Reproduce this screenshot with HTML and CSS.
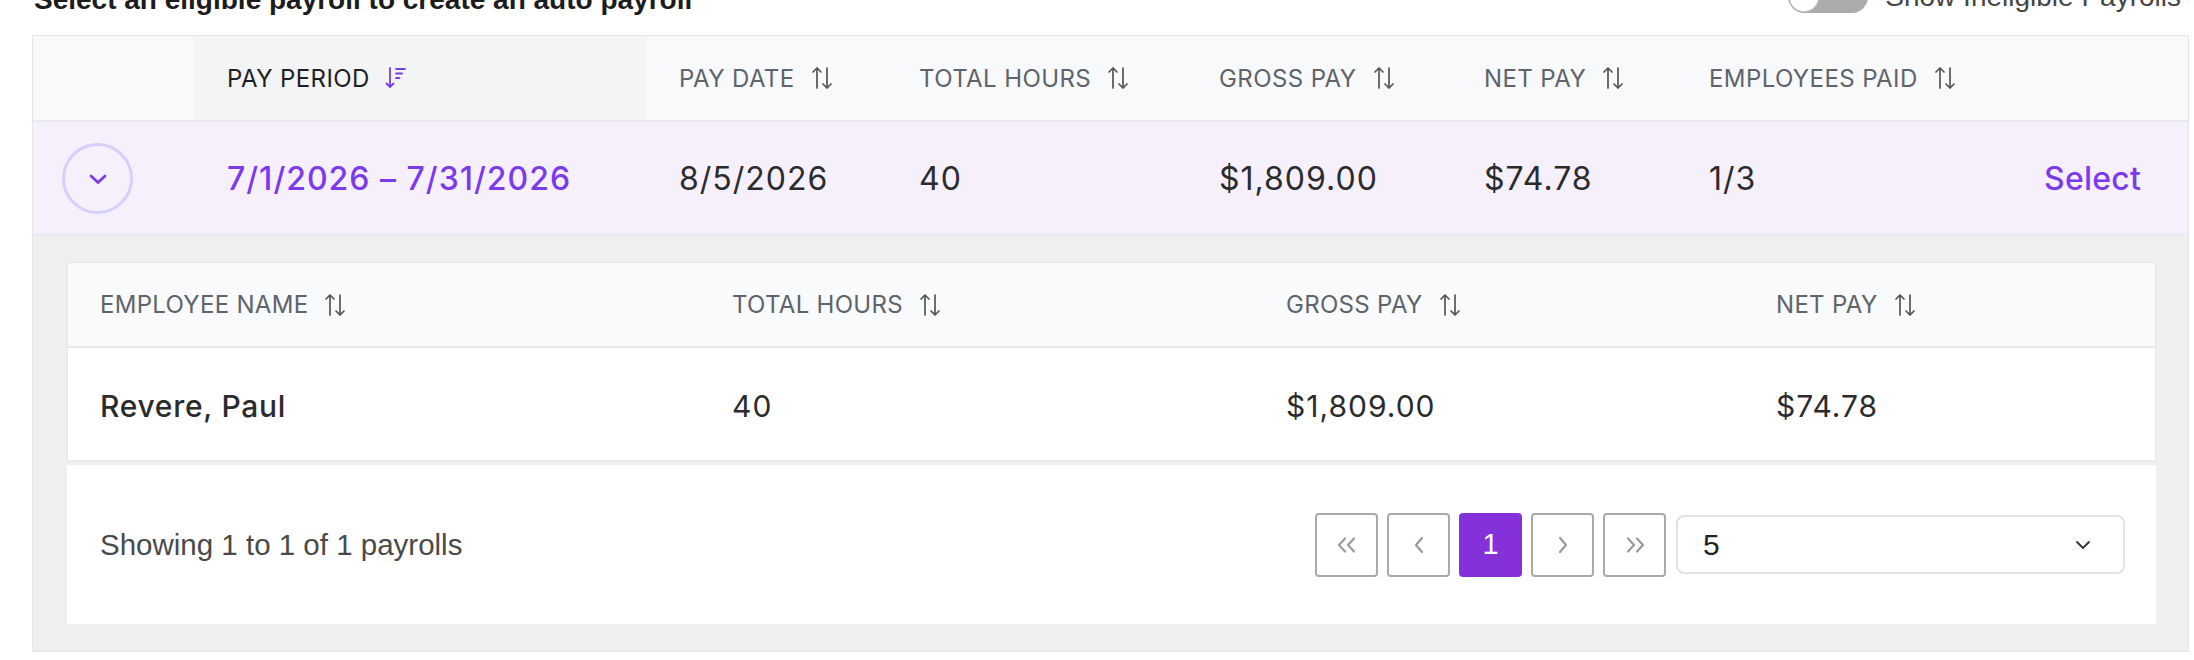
FILE: index.html
```html
<!DOCTYPE html>
<html lang="en">
<head>
<meta charset="utf-8">
<title>Auto payroll</title>
<link rel="stylesheet" href="styles.css">
</head>
<body>
<div class="page">
  <div class="topbar">
    <h2 class="title">Select an eligible payroll to create an auto payroll</h2>
    <label class="toggle-group">
      <span class="toggle"><span class="knob"></span></span>
      <span class="toggle-label">Show Ineligible Payrolls</span>
    </label>
  </div>

  <div class="table-wrap">
    <div class="thead grid-main">
      <div class="th"></div>
      <div class="th th-active">PAY PERIOD
        <svg class="sort-icon" viewBox="0 0 26 24" width="26" height="24"><path d="M5 2 V21 M1.5 17.5 L5 21 L8.5 17.5" fill="none" stroke="#7c3aed" stroke-width="1.8" stroke-linecap="round" stroke-linejoin="round"/><path d="M11 3 H20 M11 7.5 H17 M11 12 H14.5" fill="none" stroke="#7c3aed" stroke-width="1.8" stroke-linecap="round"/></svg>
      </div>
      <div class="th">PAY DATE
        <svg class="sort-icon" viewBox="0 0 24 24" width="24" height="24"><path d="M7 22 V2 M3 6 L7 2 L11 6" fill="none" stroke="#555" stroke-width="1.7" stroke-linecap="round" stroke-linejoin="round"/><path d="M17 2 V22 M13 18 L17 22 L21 18" fill="none" stroke="#555" stroke-width="1.7" stroke-linecap="round" stroke-linejoin="round"/></svg>
      </div>
      <div class="th">TOTAL HOURS
        <svg class="sort-icon" viewBox="0 0 24 24" width="24" height="24"><path d="M7 22 V2 M3 6 L7 2 L11 6" fill="none" stroke="#555" stroke-width="1.7" stroke-linecap="round" stroke-linejoin="round"/><path d="M17 2 V22 M13 18 L17 22 L21 18" fill="none" stroke="#555" stroke-width="1.7" stroke-linecap="round" stroke-linejoin="round"/></svg>
      </div>
      <div class="th">GROSS PAY
        <svg class="sort-icon" viewBox="0 0 24 24" width="24" height="24"><path d="M7 22 V2 M3 6 L7 2 L11 6" fill="none" stroke="#555" stroke-width="1.7" stroke-linecap="round" stroke-linejoin="round"/><path d="M17 2 V22 M13 18 L17 22 L21 18" fill="none" stroke="#555" stroke-width="1.7" stroke-linecap="round" stroke-linejoin="round"/></svg>
      </div>
      <div class="th">NET PAY
        <svg class="sort-icon" viewBox="0 0 24 24" width="24" height="24"><path d="M7 22 V2 M3 6 L7 2 L11 6" fill="none" stroke="#555" stroke-width="1.7" stroke-linecap="round" stroke-linejoin="round"/><path d="M17 2 V22 M13 18 L17 22 L21 18" fill="none" stroke="#555" stroke-width="1.7" stroke-linecap="round" stroke-linejoin="round"/></svg>
      </div>
      <div class="th">EMPLOYEES PAID
        <svg class="sort-icon" viewBox="0 0 24 24" width="24" height="24"><path d="M7 22 V2 M3 6 L7 2 L11 6" fill="none" stroke="#555" stroke-width="1.7" stroke-linecap="round" stroke-linejoin="round"/><path d="M17 2 V22 M13 18 L17 22 L21 18" fill="none" stroke="#555" stroke-width="1.7" stroke-linecap="round" stroke-linejoin="round"/></svg>
      </div>
      <div class="th"></div>
    </div>

    <div class="trow grid-main">
      <div class="td td-expand">
        <span class="expand-btn">
          <svg viewBox="0 0 18 11" width="18" height="11"><path d="M2 2 L9 8.5 L16 2" fill="none" stroke="#7c3aed" stroke-width="2.8" stroke-linecap="round" stroke-linejoin="round"/></svg>
        </span>
      </div>
      <div class="td td-period">7/1/2026 – 7/31/2026</div>
      <div class="td">8/5/2026</div>
      <div class="td">40</div>
      <div class="td">$1,809.00</div>
      <div class="td">$74.78</div>
      <div class="td">1/3</div>
      <div class="td td-action"><a class="select-link">Select</a></div>
    </div>

    <div class="detail">
      <div class="card">
        <div class="subhead grid-sub">
          <div class="sth">EMPLOYEE NAME
            <svg class="sort-icon" viewBox="0 0 24 24" width="24" height="24"><path d="M7 22 V2 M3 6 L7 2 L11 6" fill="none" stroke="#555" stroke-width="1.7" stroke-linecap="round" stroke-linejoin="round"/><path d="M17 2 V22 M13 18 L17 22 L21 18" fill="none" stroke="#555" stroke-width="1.7" stroke-linecap="round" stroke-linejoin="round"/></svg>
          </div>
          <div class="sth">TOTAL HOURS
            <svg class="sort-icon" viewBox="0 0 24 24" width="24" height="24"><path d="M7 22 V2 M3 6 L7 2 L11 6" fill="none" stroke="#555" stroke-width="1.7" stroke-linecap="round" stroke-linejoin="round"/><path d="M17 2 V22 M13 18 L17 22 L21 18" fill="none" stroke="#555" stroke-width="1.7" stroke-linecap="round" stroke-linejoin="round"/></svg>
          </div>
          <div class="sth">GROSS PAY
            <svg class="sort-icon" viewBox="0 0 24 24" width="24" height="24"><path d="M7 22 V2 M3 6 L7 2 L11 6" fill="none" stroke="#555" stroke-width="1.7" stroke-linecap="round" stroke-linejoin="round"/><path d="M17 2 V22 M13 18 L17 22 L21 18" fill="none" stroke="#555" stroke-width="1.7" stroke-linecap="round" stroke-linejoin="round"/></svg>
          </div>
          <div class="sth">NET PAY
            <svg class="sort-icon" viewBox="0 0 24 24" width="24" height="24"><path d="M7 22 V2 M3 6 L7 2 L11 6" fill="none" stroke="#555" stroke-width="1.7" stroke-linecap="round" stroke-linejoin="round"/><path d="M17 2 V22 M13 18 L17 22 L21 18" fill="none" stroke="#555" stroke-width="1.7" stroke-linecap="round" stroke-linejoin="round"/></svg>
          </div>
        </div>
        <div class="subrow grid-sub">
          <div class="std std-name">Revere, Paul</div>
          <div class="std">40</div>
          <div class="std">$1,809.00</div>
          <div class="std">$74.78</div>
        </div>
      </div>

      <div class="footer">
        <div class="showing">Showing 1 to 1 of 1 payrolls</div>
        <div class="pager">
          <button class="pg-btn" type="button" aria-label="First">
            <svg viewBox="0 0 24 16" width="24" height="16"><path d="M10 1.5 L4 8 L10 14.5 M19 1.5 L13 8 L19 14.5" fill="none" stroke="#9a9a9a" stroke-width="2.2" stroke-linecap="round" stroke-linejoin="round"/></svg>
          </button>
          <button class="pg-btn" type="button" aria-label="Previous">
            <svg viewBox="0 0 12 18" width="12" height="18"><path d="M9 2 L3 9 L9 16" fill="none" stroke="#9a9a9a" stroke-width="2.2" stroke-linecap="round" stroke-linejoin="round"/></svg>
          </button>
          <button class="pg-btn pg-active" type="button">1</button>
          <button class="pg-btn" type="button" aria-label="Next">
            <svg viewBox="0 0 12 18" width="12" height="18"><path d="M3 2 L9 9 L3 16" fill="none" stroke="#9a9a9a" stroke-width="2.2" stroke-linecap="round" stroke-linejoin="round"/></svg>
          </button>
          <button class="pg-btn" type="button" aria-label="Last">
            <svg viewBox="0 0 24 16" width="24" height="16"><path d="M5 1.5 L11 8 L5 14.5 M14 1.5 L20 8 L14 14.5" fill="none" stroke="#9a9a9a" stroke-width="2.2" stroke-linecap="round" stroke-linejoin="round"/></svg>
          </button>
          <div class="page-size">
            <span>5</span>
            <svg viewBox="0 0 16 10" width="16" height="10"><path d="M2 2 L8 8 L14 2" fill="none" stroke="#333" stroke-width="1.8" stroke-linecap="round" stroke-linejoin="round"/></svg>
          </div>
        </div>
      </div>
    </div>
  </div>
</div>
</body>
</html>
```

FILE: styles.css
```css
* { box-sizing: border-box; }

html, body {
  margin: 0;
  padding: 0;
  background: #ffffff;
  overflow: hidden;
}

body {
  font-family: "Inter", "Liberation Sans", sans-serif;
  color: #2b2b2e;
}

.page {
  padding-left: 32px;
  width: 2194px;
}

/* Top bar (title + toggle) */
.topbar {
  display: flex;
  align-items: flex-start;
  margin-top: -16px;
  height: 32px;
  margin-bottom: 19px;
  margin-right: 13px;
}

.title {
  margin: 0 0 0 2px;
  font-family: "Liberation Sans", Arial, sans-serif;
  font-weight: 700;
  font-size: 28px;
  line-height: 32px;
  color: #1c1c1c;
}

.toggle-group {
  margin-left: auto;
  margin-top: -3px;
  display: flex;
  align-items: center;
  gap: 17px;
}

.toggle {
  width: 80px;
  height: 32px;
  border-radius: 16px;
  background: #ababab;
  display: flex;
  align-items: center;
  padding-left: 2px;
}

.knob {
  width: 28px;
  height: 28px;
  border-radius: 50%;
  background: #ffffff;
  box-shadow: 0 0 0 1px #d0d0d0;
}

.toggle-label {
  font-family: "Liberation Sans", Arial, sans-serif;
  font-size: 28px;
  line-height: 32px;
  color: #454545;
  white-space: nowrap;
}

/* Main table */
.table-wrap {
  width: 2157px;
  border: 1px solid #e4e5e8;
  background: #ffffff;
}

.grid-main {
  display: grid;
  grid-template-columns: 160px 454px 240px 300px 265px 225px 300px 1fr;
}

.thead {
  height: 86px;
  background: #f8f9fb;
  border-bottom: 2px solid #e7e7ec;
}

.th {
  display: flex;
  align-items: center;
  padding-left: 32px;
  font-size: 24px;
  font-weight: 400;
  color: #5f636b;
  white-space: nowrap;
  letter-spacing: 0.4px;
}

.th-active {
  background: #f3f4f6;
  color: #1f1f22;
  padding-left: 34px;
}

.sort-icon {
  margin-left: 15px;
  flex: none;
}

.trow {
  height: 113px;
  background: #f6f0fd;
  border-bottom: 1px solid #ebe6f0;
}

.td {
  display: flex;
  align-items: center;
  padding-left: 32px;
  font-size: 32px;
  letter-spacing: 1px;
  color: #2b2b2e;
  white-space: nowrap;
}

.td-expand {
  padding-left: 29px;
}

.expand-btn {
  width: 71px;
  height: 71px;
  border-radius: 50%;
  border: 3px solid #d6cff9;
  display: flex;
  align-items: center;
  justify-content: center;
  padding-top: 2px;
}

.td-period {
  padding-left: 34px;
  color: #7c3aed;
  font-weight: 500;
}

.td-action {
  justify-content: flex-end;
  padding-right: 47px;
}

.select-link {
  color: #7c3aed;
  font-weight: 500;
  letter-spacing: 0.2px;
  cursor: pointer;
}

/* Expanded detail */
.detail {
  background: #efefef;
  padding: 27px 32px 27px 34px;
  display: flex;
  flex-direction: column;
  gap: 4px;
}

.card {
  background: #ffffff;
  border: 1px solid #e6e6e6;
}

.grid-sub {
  display: grid;
  grid-template-columns: 632px 554px 490px 1fr;
}

.subhead {
  height: 85px;
  background: #f8fafc;
  border-bottom: 2px solid #e5e7eb;
}

.sth {
  display: flex;
  align-items: center;
  padding-left: 32px;
  font-size: 24px;
  color: #5f636b;
  white-space: nowrap;
  letter-spacing: 0.3px;
}

.subrow {
  height: 112px;
}

.std {
  display: flex;
  align-items: center;
  padding-left: 32px;
  font-size: 30px;
  letter-spacing: 1px;
  color: #2b2b2e;
  padding-top: 4px;
}

.std-name {
  font-weight: 500;
  letter-spacing: 0.7px;
}

/* Footer / pagination */
.footer {
  height: 159px;
  background: #ffffff;
  display: flex;
  align-items: center;
  justify-content: space-between;
  padding: 0 31px 0 33px;
}

.showing {
  font-family: "Liberation Sans", Arial, sans-serif;
  font-size: 29.5px;
  color: #4a4a4a;
}

.pager {
  display: flex;
  align-items: center;
  gap: 9px;
}

.pg-btn {
  width: 63px;
  height: 64px;
  border: 2px solid #a9a9a9;
  border-radius: 4px;
  background: #ffffff;
  display: flex;
  align-items: center;
  justify-content: center;
  padding: 0;
  font-family: "Liberation Sans", Arial, sans-serif;
  font-size: 29px;
  color: #ffffff;
}

.pg-active {
  background: #8431d9;
  border-color: #8431d9;
}

.page-size {
  margin-left: 1px;
  width: 449px;
  height: 59px;
  border: 2px solid #e2e2e2;
  border-radius: 8px;
  display: flex;
  align-items: center;
  justify-content: space-between;
  padding: 0 32px 0 25px;
  font-family: "Liberation Sans", Arial, sans-serif;
  font-size: 30px;
  color: #222;
}
```
